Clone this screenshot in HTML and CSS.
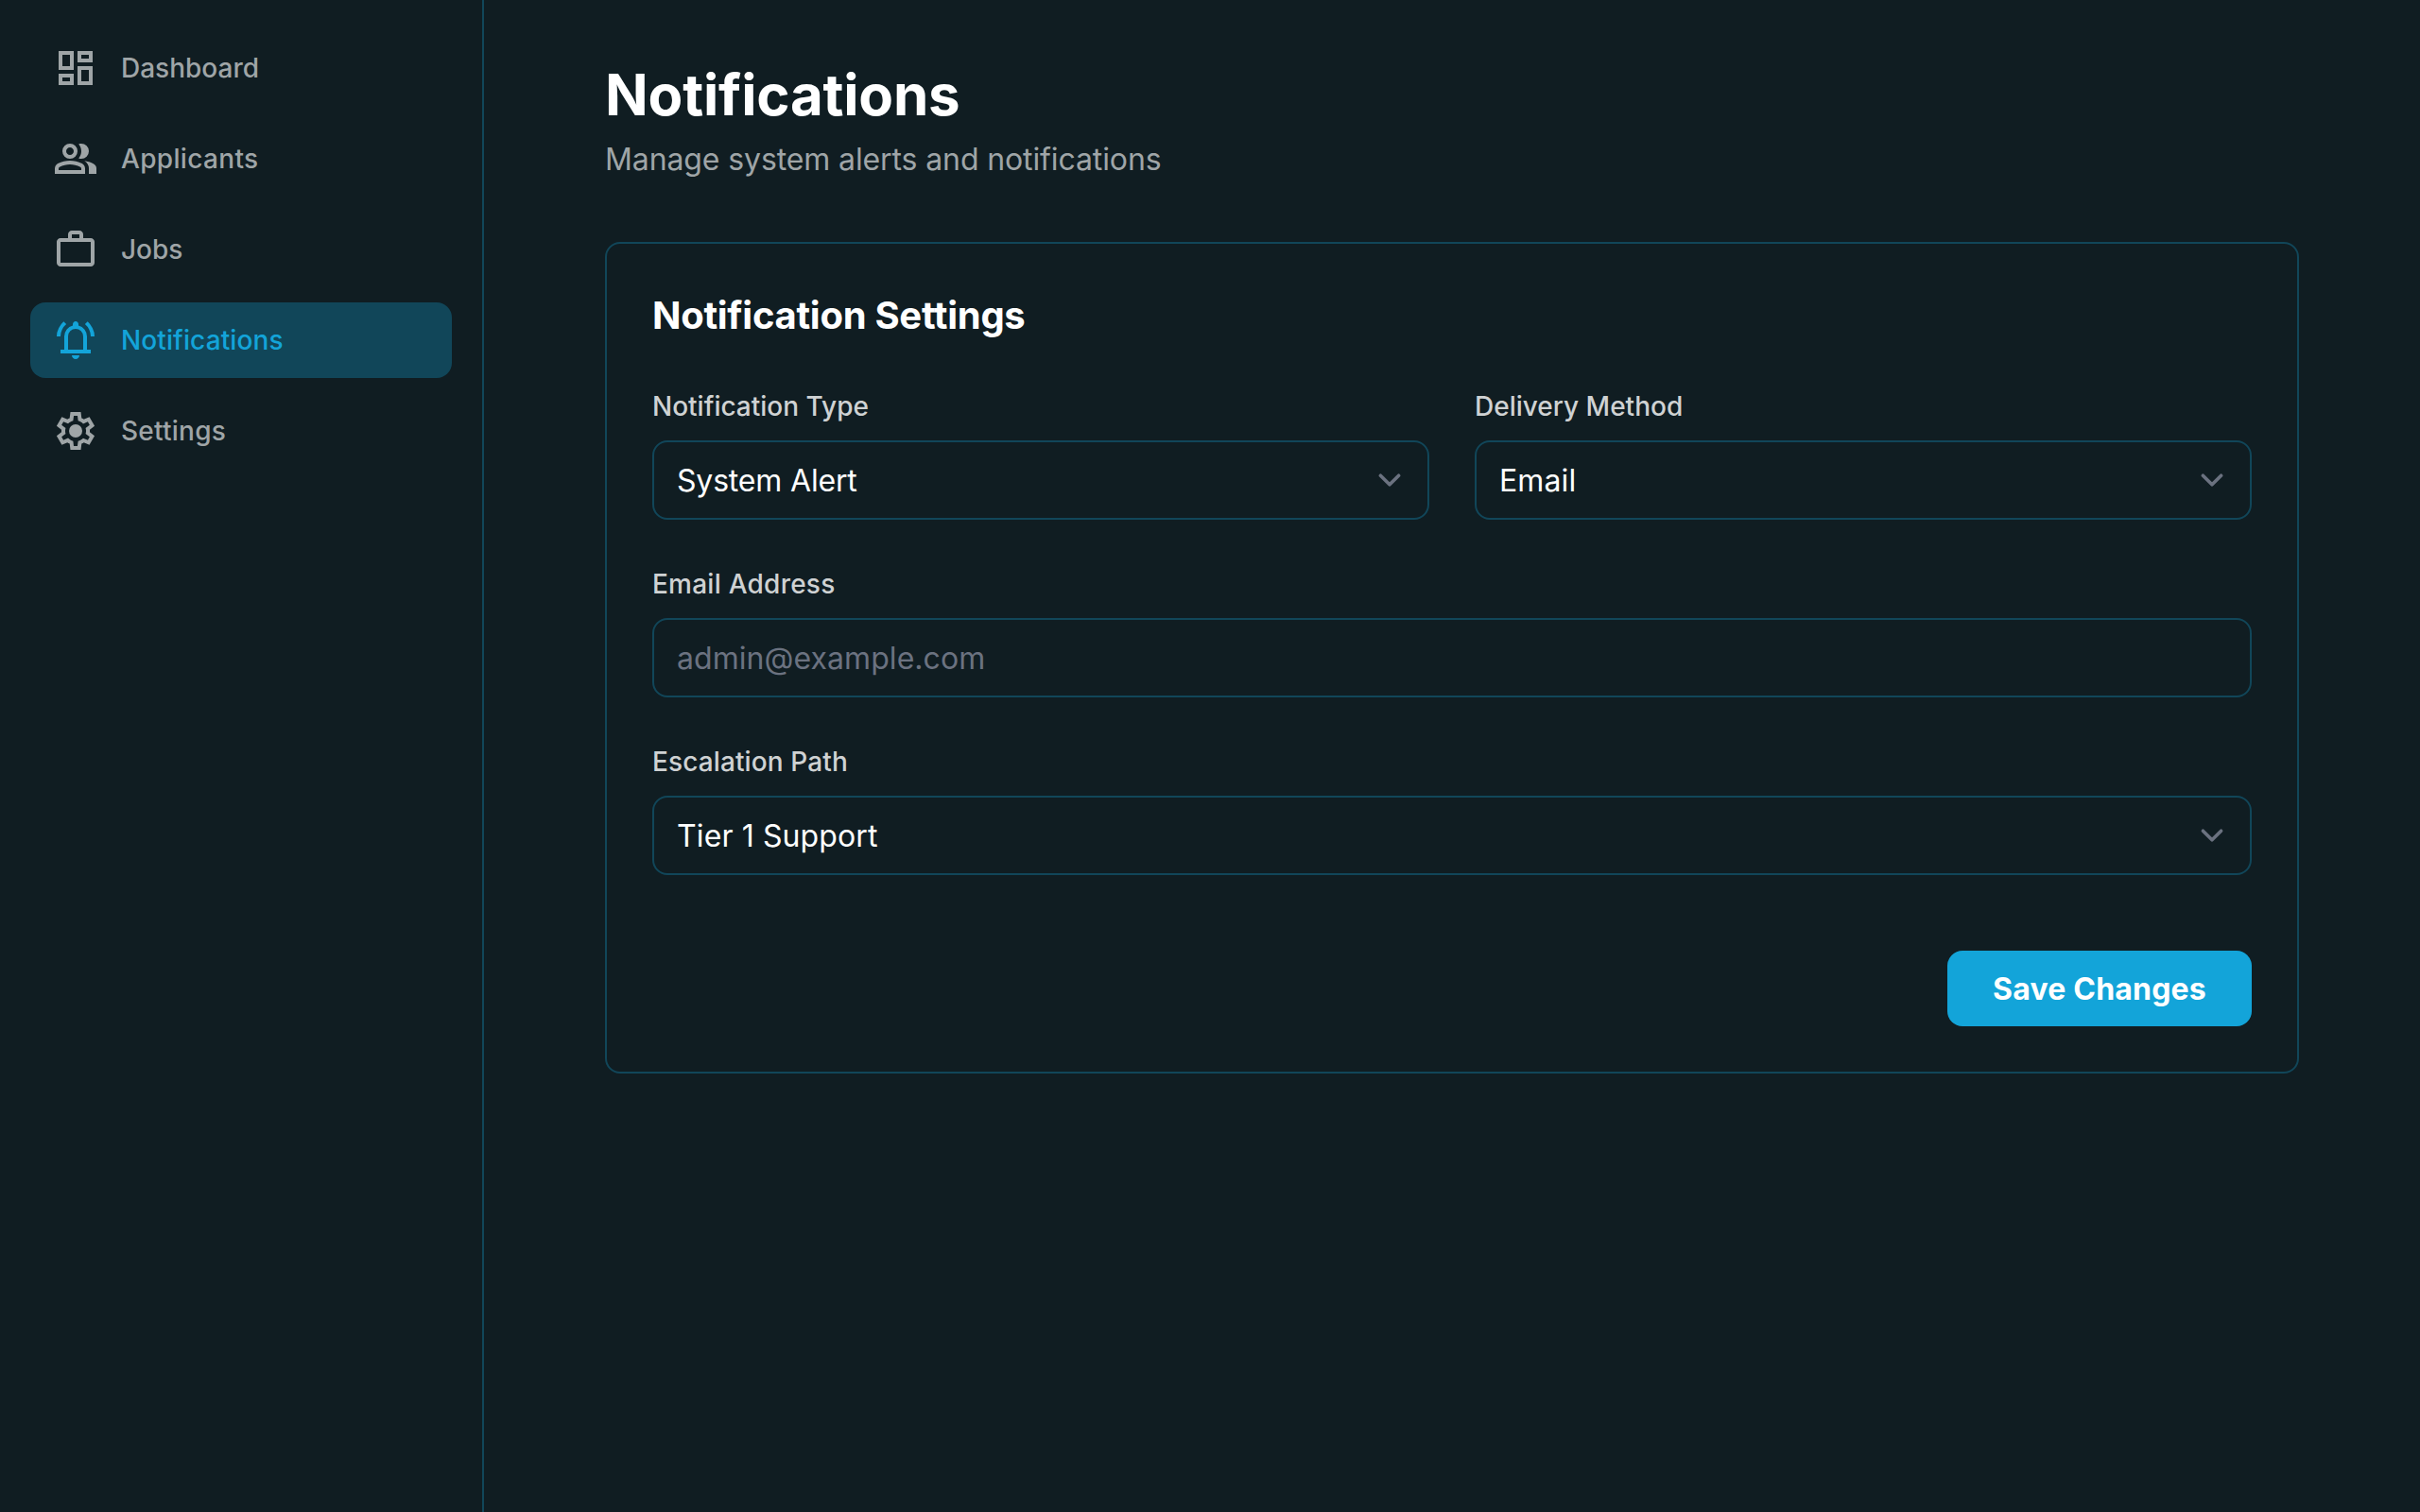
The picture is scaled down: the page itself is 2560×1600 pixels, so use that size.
FILE: index.html
```html
<!DOCTYPE html>
<html lang="en">
<head>
<meta charset="utf-8">
<title>Notifications</title>
<link rel="stylesheet" href="styles.css">
</head>
<body>
<div class="app">
  <aside class="sidebar">
    <nav class="nav">
      <a class="nav-item" href="#">
        <svg class="icon" viewBox="0 0 24 24"><path d="M19 5v2h-4V5h4M9 5v6H5V5h4m10 8v6h-4v-6h4M9 17v2H5v-2h4M21 3h-8v6h8V3zM11 3H3v10h8V3zm10 8h-8v10h8V11zm-10 4H3v6h8v-6z"/></svg>
        <span>Dashboard</span>
      </a>
      <a class="nav-item" href="#">
        <svg class="icon" viewBox="0 0 24 24"><path d="M1 20v-2.8q0-.85.4375-1.5625T2.6 14.55q1.55-.775 3.15-1.1625T9 13t3.25.3875 3.15 1.1625q.725.375 1.1625 1.0875T17 17.2V20zm18 0v-3q0-1.1-.6125-2.1125T16.65 13.15q1.275.15 2.4.5125T21.15 14.55q.9.5 1.375 1.1125T23 17v3zM9 12q-1.65 0-2.825-1.175T5 8t1.175-2.825T9 4t2.825 1.175T13 8t-1.175 2.825T9 12m10-4q0 1.65-1.175 2.825T15 12q-.275 0-.7-.0625T13.6 11.8q.675-.8 1.0375-1.775T15 8t-.3625-2.025T13.6 4.2q.35-.125.7-.1625T15 4q1.65 0 2.825 1.175T19 8M3 18h12v-.8q0-.275-.1375-.5T14.5 16.35q-1.35-.675-2.725-1.0125T9 15t-2.775.3375T3.5 16.35q-.225.125-.3625.35T3 17.2zm6-8q.825 0 1.4125-.5875T11 8t-.5875-1.4125T9 6t-1.4125.5875T7 8t.5875 1.4125T9 10"/></svg>
        <span class="track-wider">Applicants</span>
      </a>
      <a class="nav-item" href="#">
        <svg class="icon" viewBox="0 0 24 24"><path d="M4 21q-.825 0-1.4125-.5875T2 19V8q0-.825.5875-1.4125T4 6h4V4q0-.825.5875-1.4125T10 2h4q.825 0 1.4125.5875T16 4v2h4q.825 0 1.4125.5875T22 8v11q0 .825-.5875 1.4125T20 21zm0-2h16V8H4zm6-13h4V4h-4z"/></svg>
        <span>Jobs</span>
      </a>
      <a class="nav-item nav-item-active" href="#">
        <svg class="icon" viewBox="0 0 24 24"><path d="M2 10q0-2.375 1.05-4.4375T5.65 2.1L7.05 3.5Q5.7 4.625 4.85 6.3375T4 10zm18 0q0-1.95-.85-3.6625T16.95 3.5l1.4-1.4q1.55 1.4 2.6 3.4625T22 10zM4 19v-2h2v-7q0-2.075 1.25-3.6875T10.5 4.2v-.7q0-.625.4375-1.0625T12 2t1.0625.4375T13.5 3.5v.7q2 .5 3.25 2.1125T18 10v7h2v2zm8 3q-.825 0-1.4125-.5875T10 20h4q0 .825-.5875 1.4125T12 22m-4-5h8v-7q0-1.65-1.175-2.825T12 6 9.175 7.175 8 10z"/></svg>
        <span class="track-slight">Notifications</span>
      </a>
      <a class="nav-item" href="#">
        <svg class="icon" viewBox="0 0 24 24"><path d="m9.25 22-.4-3.2q-.325-.125-.6125-.3T7.675 18.125L4.7 19.375l-2.75-4.75 2.575-1.95Q4.5 12.5 4.5 12.3375v-.675q0-.1625.025-.3375L1.95 9.375l2.75-4.75 2.975 1.25q.275-.2.575-.375t.6-.3L9.25 2h5.5l.4 3.2q.325.125.6125.3t.5625.375l2.975-1.25 2.75 4.75-2.575 1.95q.025.175.025.3375v.675q0 .1625-.05.3375l2.575 1.95-2.75 4.75-2.95-1.25q-.275.2-.575.375t-.6.3l-.4 3.2zM11 20h1.975l.35-2.65q.775-.2 1.4375-.5875T15.975 15.825l2.475 1.025.975-1.7-2.15-1.625q.125-.35.175-.7375T17.5 12t-.05-.7875-.175-.7375l2.15-1.625-.975-1.7-2.475 1.05q-.55-.575-1.2125-.9625T13.325 6.65L13 4h-1.975l-.35 2.65q-.775.2-1.4375.5875T8.025 8.175L5.55 7.15l-.975 1.7 2.15 1.6q-.125.375-.175.75T6.5 12q0 .4.05.775t.175.75l-2.15 1.625.975 1.7 2.475-1.05q.55.575 1.2125.9625t1.4375.5875z"/><circle cx="12" cy="12" r="3.5"/></svg>
        <span class="track-wide">Settings</span>
      </a>
    </nav>
  </aside>
  <main class="main">
    <header class="page-header">
      <h1 class="page-title">Notifications</h1>
      <p class="page-subtitle">Manage system alerts and notifications</p>
    </header>
    <section class="card">
      <h2 class="card-title">Notification Settings</h2>
      <div class="form">
        <div class="form-row">
          <div class="field">
            <div class="label">Notification Type</div>
            <div class="control">
              <span class="value track-tight">System Alert</span>
              <svg class="chevron" viewBox="0 0 20 20"><path d="m6 8 4 4 4-4"/></svg>
            </div>
          </div>
          <div class="field">
            <div class="label">Delivery Method</div>
            <div class="control">
              <span class="value track-slight">Email</span>
              <svg class="chevron" viewBox="0 0 20 20"><path d="m6 8 4 4 4-4"/></svg>
            </div>
          </div>
        </div>
        <div class="field">
          <div class="label track-wide">Email Address</div>
          <div class="control control-empty"><span class="value">admin@example.com</span></div>
        </div>
        <div class="field">
          <div class="label track-slight">Escalation Path</div>
          <div class="control">
            <span class="value track-slight">Tier 1 Support</span>
            <svg class="chevron" viewBox="0 0 20 20"><path d="m6 8 4 4 4-4"/></svg>
          </div>
        </div>
        <div class="actions">
          <button class="button" type="button">Save Changes</button>
        </div>
      </div>
    </section>
  </main>
</div>
</body>
</html>
```
FILE: styles.css
```css
:root {
  --background: #101d22;
  --primary: #13a4d9;
  --border: #114659;
  --muted: #9fa5a7;
  --label: #cfd2d3;
}

* {
  box-sizing: border-box;
}

body {
  margin: 0;
  background: var(--background);
  color: #fff;
  font-family: Inter, sans-serif;
  font-size: 32px;
  line-height: 48px;
}

.app {
  display: flex;
  min-height: 1600px;
}

.sidebar {
  flex: 0 0 512px;
  padding: 32px;
  border-right: 2px solid var(--border);
}

.nav {
  display: flex;
  flex-direction: column;
  gap: 16px;
}

.nav-item {
  display: flex;
  align-items: center;
  gap: 24px;
  height: 80px;
  padding: 0 24px;
  border-radius: 16px;
  color: var(--muted);
  font-size: 28px;
  font-weight: 500;
  line-height: 40px;
  text-decoration: none;
}

.nav-item-active {
  background: var(--border);
  color: var(--primary);
}

.icon {
  width: 48px;
  height: 48px;
  fill: currentColor;
}

.main {
  flex: 1;
  padding: 64px 128px;
}

.page-header {
  margin-bottom: 63px;
}

.page-title {
  margin: 0;
  font-size: 60px;
  font-weight: 700;
  line-height: 72px;
  letter-spacing: -0.2px;
}

.page-subtitle {
  margin: 9px 0 0;
  color: var(--muted);
  letter-spacing: -0.113px;
}

.card {
  padding: 48px;
  border: 2px solid var(--border);
  border-radius: 16px;
}

.card-title {
  margin: 0 0 48px;
  font-size: 40px;
  font-weight: 700;
  line-height: 56px;
  letter-spacing: -0.285px;
}

.form {
  display: flex;
  flex-direction: column;
  gap: 48px;
}

.form-row {
  display: grid;
  grid-template-columns: 1fr 1fr;
  gap: 48px;
}

.field {
  display: flex;
  flex-direction: column;
  gap: 16px;
}

.label {
  color: var(--label);
  font-size: 28px;
  font-weight: 500;
  line-height: 40px;
}

.control {
  display: flex;
  align-items: center;
  justify-content: space-between;
  height: 84px;
  padding: 0 16px 0 24px;
  border: 2px solid var(--border);
  border-radius: 16px;
}

.control-empty {
  color: #6b7280;
  letter-spacing: 0.06px;
}

.value {
  padding-top: 2px;
}

.track-tight {
  letter-spacing: -0.18px;
}

.track-slight {
  letter-spacing: 0.11px;
}

.track-wide {
  letter-spacing: 0.24px;
}

.track-wider {
  letter-spacing: 0.33px;
}

.chevron {
  width: 48px;
  height: 48px;
  fill: none;
  stroke: #6b7280;
  stroke-width: 1.5;
  stroke-linecap: round;
  stroke-linejoin: round;
}

.actions {
  display: flex;
  justify-content: flex-end;
  padding-top: 32px;
}

.button {
  height: 80px;
  padding: 2px 48px 0;
  border: 0;
  border-radius: 16px;
  background: var(--primary);
  color: #fff;
  font: 700 32px/48px Inter, sans-serif;
  letter-spacing: 0.206px;
}
```
